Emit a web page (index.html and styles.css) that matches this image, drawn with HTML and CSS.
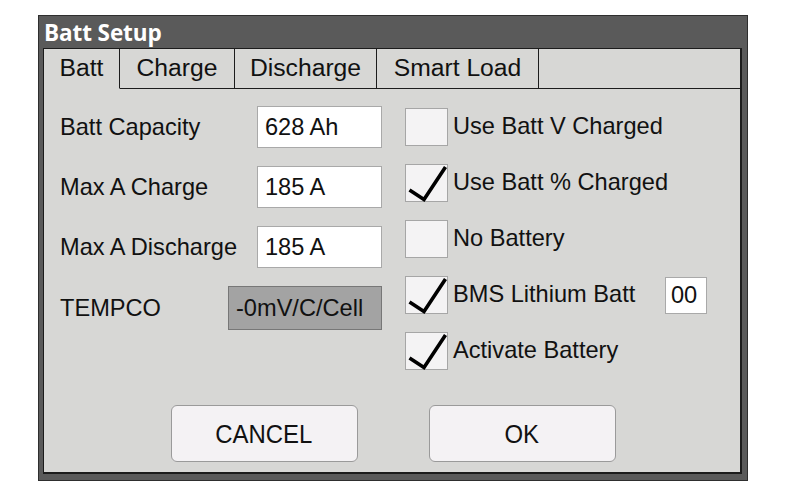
FILE: index.html
```html
<!DOCTYPE html>
<html>
<head>
<meta charset="utf-8">
<link rel="stylesheet" href="styles.css">
</head>
<body>
<div class="window">
  <div class="titlebar">Batt Setup</div>
  <div class="panel">
    <div class="tabs">
      <div class="tab tab-batt active">Batt</div>
      <div class="tab tab-charge">Charge</div>
      <div class="tab tab-discharge">Discharge</div>
      <div class="tab tab-smart">Smart Load</div>
      <div class="tab-fill"></div>
    </div>
    <div class="form">
      <div class="col-left">
        <div class="field">
          <span class="label">Batt Capacity</span>
          <span class="input">628 Ah</span>
        </div>
        <div class="field">
          <span class="label">Max A Charge</span>
          <span class="input">185 A</span>
        </div>
        <div class="field">
          <span class="label">Max A Discharge</span>
          <span class="input">185 A</span>
        </div>
        <div class="field field-tall">
          <span class="label">TEMPCO</span>
          <span class="input input-disabled">-0mV/C/Cell</span>
        </div>
      </div>
      <div class="col-right">
        <div class="check-row">
          <span class="checkbox"></span>
          <span class="check-label">Use Batt V Charged</span>
        </div>
        <div class="check-row">
          <span class="checkbox"><svg class="tick" viewBox="0 0 43 38" width="43" height="38"><polyline points="4.5,26 19,35.5 40.5,3" /></svg></span>
          <span class="check-label">Use Batt % Charged</span>
        </div>
        <div class="check-row">
          <span class="checkbox"></span>
          <span class="check-label">No Battery</span>
        </div>
        <div class="check-row">
          <span class="checkbox"><svg class="tick" viewBox="0 0 43 38" width="43" height="38"><polyline points="4.5,26 19,35.5 40.5,3" /></svg></span>
          <span class="check-label">BMS Lithium Batt</span>
          <span class="small-input">00</span>
        </div>
        <div class="check-row">
          <span class="checkbox"><svg class="tick" viewBox="0 0 43 38" width="43" height="38"><polyline points="4.5,26 19,35.5 40.5,3" /></svg></span>
          <span class="check-label">Activate Battery</span>
        </div>
      </div>
    </div>
    <div class="buttons">
      <div class="btn"><span class="btn-text">CANCEL</span></div>
      <div class="btn"><span class="btn-text">OK</span></div>
    </div>
  </div>
</div>
</body>
</html>
```
FILE: styles.css
```css
* { box-sizing: border-box; }

html, body {
  margin: 0;
  padding: 0;
  background: #ffffff;
}

body {
  font-family: "Liberation Sans", Arial, sans-serif;
  color: #111111;
}

.window {
  margin: 15px 0 0 38px;
  width: 710px;
  height: 466px;
  background: #5a5a5a;
  border: 1px solid #2e2e2e;
  padding: 0 5px 6px 4px;
  display: flex;
  flex-direction: column;
}

.titlebar {
  height: 32px;
  display: flex;
  align-items: center;
  padding-left: 1px;
  padding-top: 1px;
  color: #ffffff;
  font-family: "Open Sans", "DejaVu Sans", sans-serif;
  font-weight: 700;
  font-size: 22.5px;
  letter-spacing: -0.1px;
}

.panel {
  flex: 1;
  background: #d7d7d5;
  border: 1px solid #1c1c1c;
  border-right-width: 2px;
  border-bottom-width: 2px;
  display: flex;
  flex-direction: column;
}

.tabs {
  display: flex;
  height: 40px;
}

.tab {
  display: flex;
  align-items: center;
  justify-content: center;
  padding-bottom: 2px;
  font-size: 24.7px;
  border-right: 1px solid #1c1c1c;
  border-bottom: 1px solid #1c1c1c;
}

.tab.active { border-bottom-color: transparent; }

.tab-batt { width: 76px; }
.tab-charge { width: 115px; }
.tab-discharge { width: 142px; }
.tab-smart { width: 162px; }

.tab-fill {
  flex: 1;
  border-bottom: 1px solid #1c1c1c;
}

.form {
  display: flex;
  gap: 23px;
  padding: 17px 0 0 16px;
}

.col-left {
  width: 322px;
  display: flex;
  flex-direction: column;
  gap: 18px;
}

.field {
  height: 42px;
  display: flex;
  align-items: center;
  justify-content: space-between;
}

.field-tall { height: 44px; }

.label {
  font-size: 23.6px;
}

.input {
  width: 125px;
  height: 100%;
  background: #ffffff;
  border: 1px solid #a9a9a9;
  display: flex;
  align-items: center;
  padding-left: 7px;
  font-size: 23.6px;
}

.input-disabled {
  width: 154px;
  background: #a3a3a3;
  border-color: #777777;
}

.col-right {
  width: 302px;
  padding-top: 2px;
  display: flex;
  flex-direction: column;
  gap: 18px;
}

.check-row {
  height: 38px;
  display: flex;
  align-items: center;
}

.checkbox {
  width: 43px;
  height: 38px;
  flex: none;
  background: #f4f3f4;
  border: 1px solid #a6a6a6;
  position: relative;
}

.tick {
  position: absolute;
  left: -1px;
  top: -1px;
  fill: none;
  stroke: #000000;
  stroke-width: 3.6;
  stroke-linejoin: miter;
}

.check-label {
  margin-left: 5px;
  font-size: 23.6px;
  padding-bottom: 2px;
}

.small-input {
  margin-left: auto;
  width: 42px;
  height: 37px;
  background: #ffffff;
  border: 1px solid #a9a9a9;
  display: flex;
  align-items: center;
  padding-left: 5px;
  font-size: 23.6px;
}

.buttons {
  margin-top: auto;
  margin-bottom: 10px;
  display: flex;
  justify-content: center;
  gap: 71px;
  padding-left: 2px;
}

.btn {
  width: 187px;
  height: 57px;
  background: #f4f2f4;
  border: 1px solid #9a9a9a;
  border-radius: 6px;
  display: flex;
  align-items: center;
  justify-content: center;
  padding-top: 2px;
}

.btn-text {
  display: inline-block;
  font-size: 26px;
  transform: scaleX(0.92);
}
```
